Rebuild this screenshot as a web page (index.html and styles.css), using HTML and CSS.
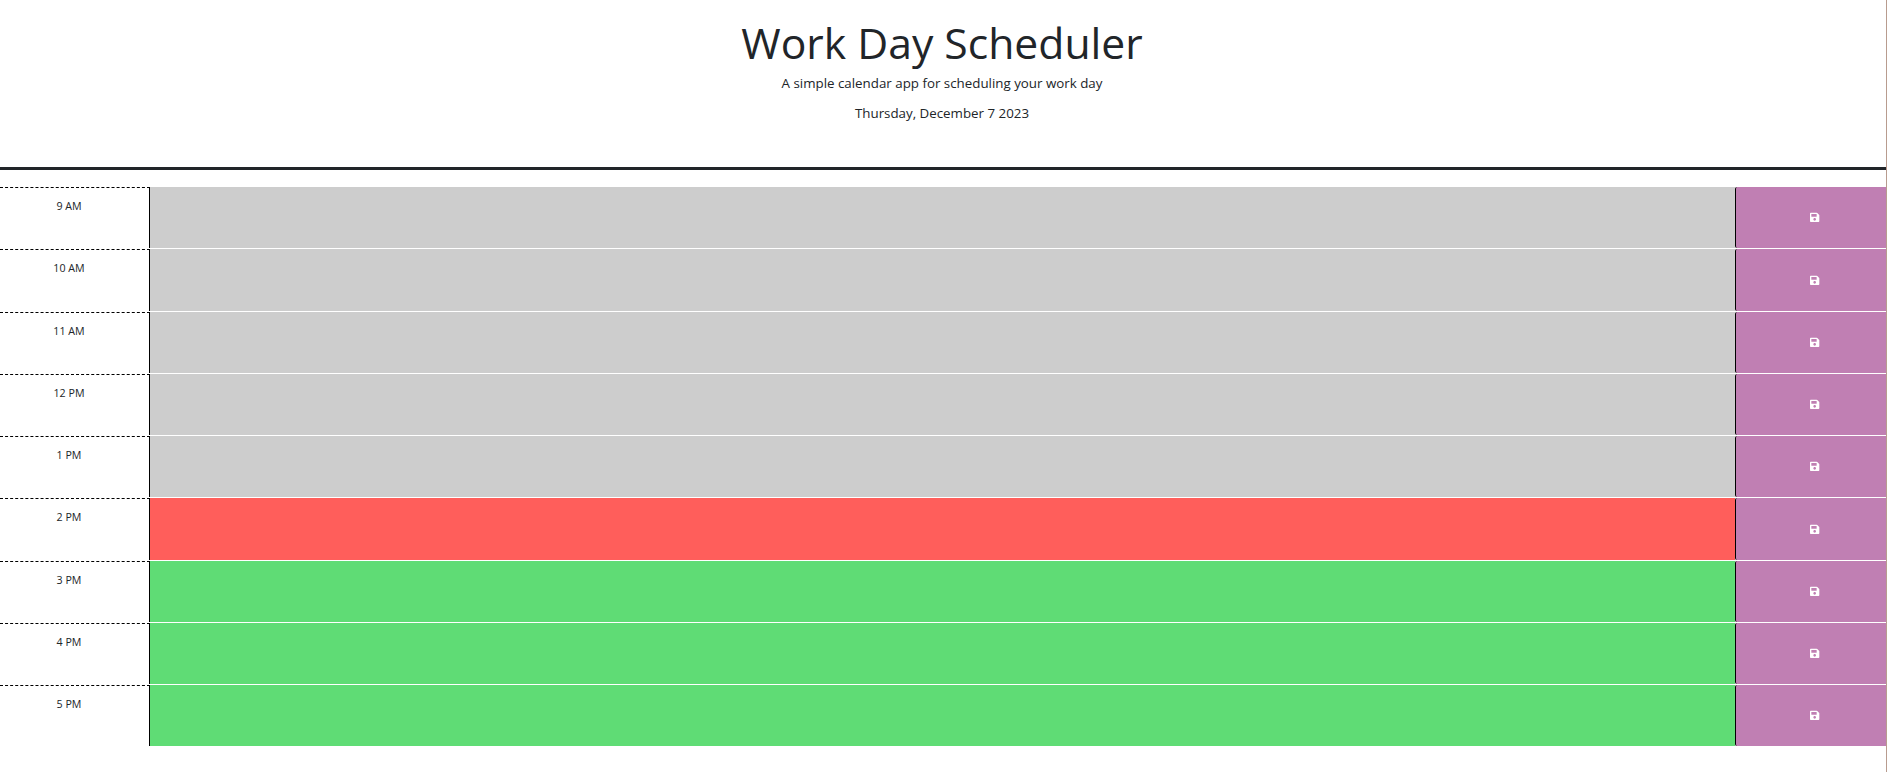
FILE: index.html
```html
<!DOCTYPE html>
<html lang="en">
<head>
<meta charset="utf-8">
<title>Work Day Scheduler</title>
<link rel="stylesheet" href="styles.css">
</head>
<body>
<div class="page">
  <header class="jumbotron">
    <h1 class="title">Work Day Scheduler</h1>
    <p class="lead">A simple calendar app for scheduling your work day</p>
    <p class="lead date">Thursday, December 7 2023</p>
  </header>
  <main class="schedule">
    <div class="time-block"><div class="hour">9 AM</div><textarea class="description past"></textarea><button class="save-btn" aria-label="save"><svg class="save-icon" viewBox="0 0 448 512"><path d="M433.941 129.941l-83.882-83.882A48 48 0 0 0 316.118 32H48C21.49 32 0 53.49 0 80v352c0 26.51 21.49 48 48 48h352c26.51 0 48-21.49 48-48V163.882a48 48 0 0 0-14.059-33.941zM224 416c-35.346 0-64-28.654-64-64 0-35.346 28.654-64 64-64s64 28.654 64 64c0 35.346-28.654 64-64 64zm96-304.52V212c0 6.627-5.373 12-12 12H76c-6.627 0-12-5.373-12-12V108c0-6.627 5.373-12 12-12h228.52c3.183 0 6.235 1.264 8.485 3.515l3.48 3.48A11.996 11.996 0 0 1 320 111.48z"/></svg></button></div>
    <div class="time-block"><div class="hour">10 AM</div><textarea class="description past"></textarea><button class="save-btn" aria-label="save"><svg class="save-icon" viewBox="0 0 448 512"><path d="M433.941 129.941l-83.882-83.882A48 48 0 0 0 316.118 32H48C21.49 32 0 53.49 0 80v352c0 26.51 21.49 48 48 48h352c26.51 0 48-21.49 48-48V163.882a48 48 0 0 0-14.059-33.941zM224 416c-35.346 0-64-28.654-64-64 0-35.346 28.654-64 64-64s64 28.654 64 64c0 35.346-28.654 64-64 64zm96-304.52V212c0 6.627-5.373 12-12 12H76c-6.627 0-12-5.373-12-12V108c0-6.627 5.373-12 12-12h228.52c3.183 0 6.235 1.264 8.485 3.515l3.48 3.48A11.996 11.996 0 0 1 320 111.48z"/></svg></button></div>
    <div class="time-block"><div class="hour">11 AM</div><textarea class="description past"></textarea><button class="save-btn" aria-label="save"><svg class="save-icon" viewBox="0 0 448 512"><path d="M433.941 129.941l-83.882-83.882A48 48 0 0 0 316.118 32H48C21.49 32 0 53.49 0 80v352c0 26.51 21.49 48 48 48h352c26.51 0 48-21.49 48-48V163.882a48 48 0 0 0-14.059-33.941zM224 416c-35.346 0-64-28.654-64-64 0-35.346 28.654-64 64-64s64 28.654 64 64c0 35.346-28.654 64-64 64zm96-304.52V212c0 6.627-5.373 12-12 12H76c-6.627 0-12-5.373-12-12V108c0-6.627 5.373-12 12-12h228.52c3.183 0 6.235 1.264 8.485 3.515l3.48 3.48A11.996 11.996 0 0 1 320 111.48z"/></svg></button></div>
    <div class="time-block"><div class="hour">12 PM</div><textarea class="description past"></textarea><button class="save-btn" aria-label="save"><svg class="save-icon" viewBox="0 0 448 512"><path d="M433.941 129.941l-83.882-83.882A48 48 0 0 0 316.118 32H48C21.49 32 0 53.49 0 80v352c0 26.51 21.49 48 48 48h352c26.51 0 48-21.49 48-48V163.882a48 48 0 0 0-14.059-33.941zM224 416c-35.346 0-64-28.654-64-64 0-35.346 28.654-64 64-64s64 28.654 64 64c0 35.346-28.654 64-64 64zm96-304.52V212c0 6.627-5.373 12-12 12H76c-6.627 0-12-5.373-12-12V108c0-6.627 5.373-12 12-12h228.52c3.183 0 6.235 1.264 8.485 3.515l3.48 3.48A11.996 11.996 0 0 1 320 111.48z"/></svg></button></div>
    <div class="time-block"><div class="hour">1 PM</div><textarea class="description past"></textarea><button class="save-btn" aria-label="save"><svg class="save-icon" viewBox="0 0 448 512"><path d="M433.941 129.941l-83.882-83.882A48 48 0 0 0 316.118 32H48C21.49 32 0 53.49 0 80v352c0 26.51 21.49 48 48 48h352c26.51 0 48-21.49 48-48V163.882a48 48 0 0 0-14.059-33.941zM224 416c-35.346 0-64-28.654-64-64 0-35.346 28.654-64 64-64s64 28.654 64 64c0 35.346-28.654 64-64 64zm96-304.52V212c0 6.627-5.373 12-12 12H76c-6.627 0-12-5.373-12-12V108c0-6.627 5.373-12 12-12h228.52c3.183 0 6.235 1.264 8.485 3.515l3.48 3.48A11.996 11.996 0 0 1 320 111.48z"/></svg></button></div>
    <div class="time-block"><div class="hour">2 PM</div><textarea class="description present"></textarea><button class="save-btn" aria-label="save"><svg class="save-icon" viewBox="0 0 448 512"><path d="M433.941 129.941l-83.882-83.882A48 48 0 0 0 316.118 32H48C21.49 32 0 53.49 0 80v352c0 26.51 21.49 48 48 48h352c26.51 0 48-21.49 48-48V163.882a48 48 0 0 0-14.059-33.941zM224 416c-35.346 0-64-28.654-64-64 0-35.346 28.654-64 64-64s64 28.654 64 64c0 35.346-28.654 64-64 64zm96-304.52V212c0 6.627-5.373 12-12 12H76c-6.627 0-12-5.373-12-12V108c0-6.627 5.373-12 12-12h228.52c3.183 0 6.235 1.264 8.485 3.515l3.48 3.48A11.996 11.996 0 0 1 320 111.48z"/></svg></button></div>
    <div class="time-block"><div class="hour">3 PM</div><textarea class="description future"></textarea><button class="save-btn" aria-label="save"><svg class="save-icon" viewBox="0 0 448 512"><path d="M433.941 129.941l-83.882-83.882A48 48 0 0 0 316.118 32H48C21.49 32 0 53.49 0 80v352c0 26.51 21.49 48 48 48h352c26.51 0 48-21.49 48-48V163.882a48 48 0 0 0-14.059-33.941zM224 416c-35.346 0-64-28.654-64-64 0-35.346 28.654-64 64-64s64 28.654 64 64c0 35.346-28.654 64-64 64zm96-304.52V212c0 6.627-5.373 12-12 12H76c-6.627 0-12-5.373-12-12V108c0-6.627 5.373-12 12-12h228.52c3.183 0 6.235 1.264 8.485 3.515l3.48 3.48A11.996 11.996 0 0 1 320 111.48z"/></svg></button></div>
    <div class="time-block"><div class="hour">4 PM</div><textarea class="description future"></textarea><button class="save-btn" aria-label="save"><svg class="save-icon" viewBox="0 0 448 512"><path d="M433.941 129.941l-83.882-83.882A48 48 0 0 0 316.118 32H48C21.49 32 0 53.49 0 80v352c0 26.51 21.49 48 48 48h352c26.51 0 48-21.49 48-48V163.882a48 48 0 0 0-14.059-33.941zM224 416c-35.346 0-64-28.654-64-64 0-35.346 28.654-64 64-64s64 28.654 64 64c0 35.346-28.654 64-64 64zm96-304.52V212c0 6.627-5.373 12-12 12H76c-6.627 0-12-5.373-12-12V108c0-6.627 5.373-12 12-12h228.52c3.183 0 6.235 1.264 8.485 3.515l3.48 3.48A11.996 11.996 0 0 1 320 111.48z"/></svg></button></div>
    <div class="time-block"><div class="hour">5 PM</div><textarea class="description future"></textarea><button class="save-btn" aria-label="save"><svg class="save-icon" viewBox="0 0 448 512"><path d="M433.941 129.941l-83.882-83.882A48 48 0 0 0 316.118 32H48C21.49 32 0 53.49 0 80v352c0 26.51 21.49 48 48 48h352c26.51 0 48-21.49 48-48V163.882a48 48 0 0 0-14.059-33.941zM224 416c-35.346 0-64-28.654-64-64 0-35.346 28.654-64 64-64s64 28.654 64 64c0 35.346-28.654 64-64 64zm96-304.52V212c0 6.627-5.373 12-12 12H76c-6.627 0-12-5.373-12-12V108c0-6.627 5.373-12 12-12h228.52c3.183 0 6.235 1.264 8.485 3.515l3.48 3.48A11.996 11.996 0 0 1 320 111.48z"/></svg></button></div>
  </main>
</div>
</body>
</html>
```
FILE: styles.css
```css
* { box-sizing: border-box; }
html, body { margin: 0; height: 100%; overflow: hidden; background: #fff; }
body { font-family: "Open Sans", sans-serif; color: #212529; }
.page { height: 100vh; border-right: 1px solid #b89c8f; }
.jumbotron { height: 170px; padding: 14px 2px 0 0; border-bottom: 3px solid #212529; text-align: center; }
.title { margin: 0 0 1px; font-size: 42.67px; font-weight: 400; line-height: 58px; }
.lead { margin: 0 0 9px; font-size: 13.33px; line-height: 21px; }
.schedule { display: flex; flex-direction: column; gap: 1px; margin-top: 17px; }
.time-block { display: flex; height: 61.25px; }
.hour { flex: 0 0 150px; padding: 9px 11px 0 0; border-top: 1px dashed #000; border-right: 1px solid #000; font-size: 10.67px; line-height: 18px; text-align: center; color: #212529; }
.description { flex: 1 1 auto; display: block; min-width: 0; margin: 0; padding: 0; border: 0; border-radius: 0; outline: 0; resize: none; }
.past { background: #cdcdcd; }
.present { background: #ff5e5b; }
.future { background: #5fdc75; }
.save-btn { flex: 0 0 151px; display: flex; align-items: center; justify-content: center; margin: 0; padding: 0 0 0 8px; border: 0; border-left: 1px solid #000; border-radius: 2px 0 0 2px; background: #c07fb3; color: #fff; }
.save-icon { display: block; width: 9.33px; height: 10.67px; fill: currentColor; }
```
